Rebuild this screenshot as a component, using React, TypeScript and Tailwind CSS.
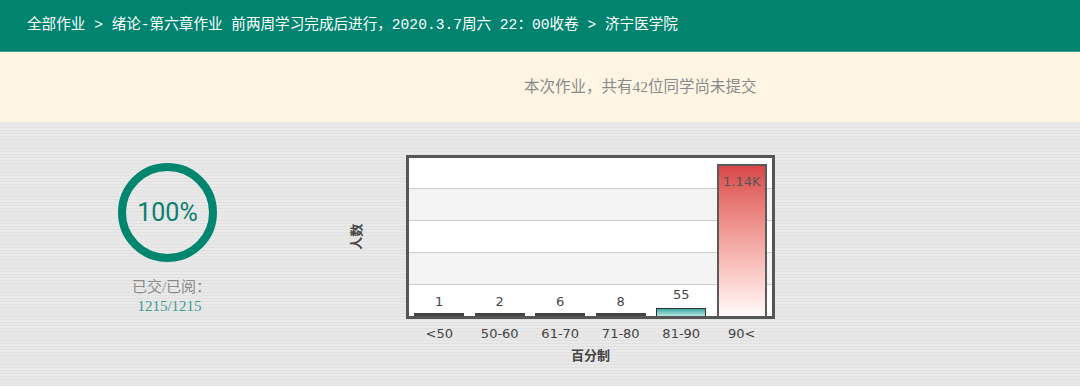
const buckets = [
  { label: "<50", value: "1" },
  { label: "50-60", value: "2" },
  { label: "61-70", value: "6" },
  { label: "71-80", value: "8" },
  { label: "81-90", value: "55" },
  { label: "90<", value: "1.14K" },
];

const serif = "font-['Liberation_Serif','Noto_Sans_CJK_SC',serif]";

function Ring() {
  return (
    <div className="relative w-[99px] h-[99px]">
      <svg width="99" height="99" viewBox="0 0 99 99" className="block">
        <circle cx="49.5" cy="49.5" r="45.5" fill="none" stroke="#00866f" strokeWidth="8" />
      </svg>
      <div className="absolute inset-0 flex items-center justify-center font-['Roboto',sans-serif] text-[25px] text-[#0b7f6f]">
        100%
      </div>
    </div>
  );
}

function Chart() {
  return (
    <div className="flex items-start">
      {/* y-axis title */}
      <div className="w-[70px] h-[164px] flex items-center justify-start pl-[8px]">
        <span className="-rotate-90 font-['DejaVu_Sans','Noto_Sans_CJK_SC',sans-serif] font-bold text-[13px] text-[#444] whitespace-nowrap">
          人数
        </span>
      </div>

      <div className="flex flex-col w-[369px]">
        <div className="border-[3px] border-[#565656] h-[164px]">
          <div className="relative h-full">
            {/* bands */}
            <div className="flex flex-col h-full">
              <div className="h-[31px] bg-white border-b border-[#cccccc]" />
              <div className="h-[32px] bg-[#f4f4f4] border-b border-[#cccccc]" />
              <div className="h-[32px] bg-white border-b border-[#cccccc]" />
              <div className="h-[32px] bg-[#f4f4f4] border-b border-[#cccccc]" />
              <div className="flex-1 bg-white" />
            </div>
            {/* bars */}
            <div className="absolute inset-0 grid grid-cols-6 font-['DejaVu_Sans',sans-serif] text-[13px] text-[#444]">
              {buckets.map((b, i) => (
                <div key={b.label} className="flex flex-col items-center justify-end">
                  {i < 4 && (
                    <>
                      <span className="mb-[5px] leading-none">{b.value}</span>
                      <div className="w-[50px] h-[3px] bg-[#444]" />
                    </>
                  )}
                  {i === 4 && (
                    <>
                      <span className="mb-[7px] leading-none">{b.value}</span>
                      <div className="w-[50px] h-[8px] border border-[#333] border-b-0 bg-gradient-to-b from-[#2ea8a3] to-[#b9e6e3]" />
                    </>
                  )}
                  {i === 5 && (
                    <div className="w-[50px] h-[152px] border-2 border-b-0 border-[#5a5a5a] bg-gradient-to-b from-[#d8474a] to-[#fffafa] flex justify-center pt-[9px]">
                      <span className="leading-none text-[13px] text-[#555]">{b.value}</span>
                    </div>
                  )}
                </div>
              ))}
            </div>
          </div>
        </div>
        <div className="grid grid-cols-6 px-[3px] pt-[8px] font-['DejaVu_Sans',sans-serif] text-[13px] text-[#444] leading-none">
          {buckets.map((b) => (
            <span key={b.label} className="text-center">
              {b.label}
            </span>
          ))}
        </div>
        <div className="text-center pt-[9px] font-['DejaVu_Sans','Noto_Sans_CJK_SC',sans-serif] font-bold text-[13px] text-[#444] leading-none">
          百分制
        </div>
      </div>
    </div>
  );
}

export default function App() {
  return (
    <div className="w-[1080px] h-[386px] overflow-hidden flex flex-col">
      {/* Breadcrumb */}
      <div className="h-[52px] bg-[#00836f] border-b border-[#3d9c8d] flex items-center pl-[27px] text-white text-[14.6px] font-['Liberation_Mono','Noto_Sans_CJK_SC',monospace]">
        全部作业 &gt; 绪论-第六章作业 前两周学习完成后进行，2020.3.7周六 22：00收卷 &gt; 济宁医学院
      </div>

      {/* Notice */}
      <div className={`h-[70px] bg-[#fef5e5] flex items-center pl-[524px] text-[15.5px] text-[#8a8a8a] ${serif}`}>
        本次作业，共有42位同学尚未提交
      </div>

      {/* Stats */}
      <div className="flex-1 bg-[repeating-linear-gradient(180deg,#e9e9e9_0px,#e9e9e9_2px,#e1e1e1_2px,#e1e1e1_3px)] flex items-start pt-[33px]">
        <div className="w-[336px] flex flex-col items-center pt-[8px] pr-[1px]">
          <Ring />
          <div className={`mt-[18px] pl-[8px] text-[15px] text-[#8a8a8a] leading-none ${serif}`}>已交/已阅：</div>
          <div className={`mt-[4px] pl-[4px] text-[15px] text-[#3d9b93] leading-none ${serif}`}>1215/1215</div>
        </div>
        <Chart />
      </div>
    </div>
  );
}
